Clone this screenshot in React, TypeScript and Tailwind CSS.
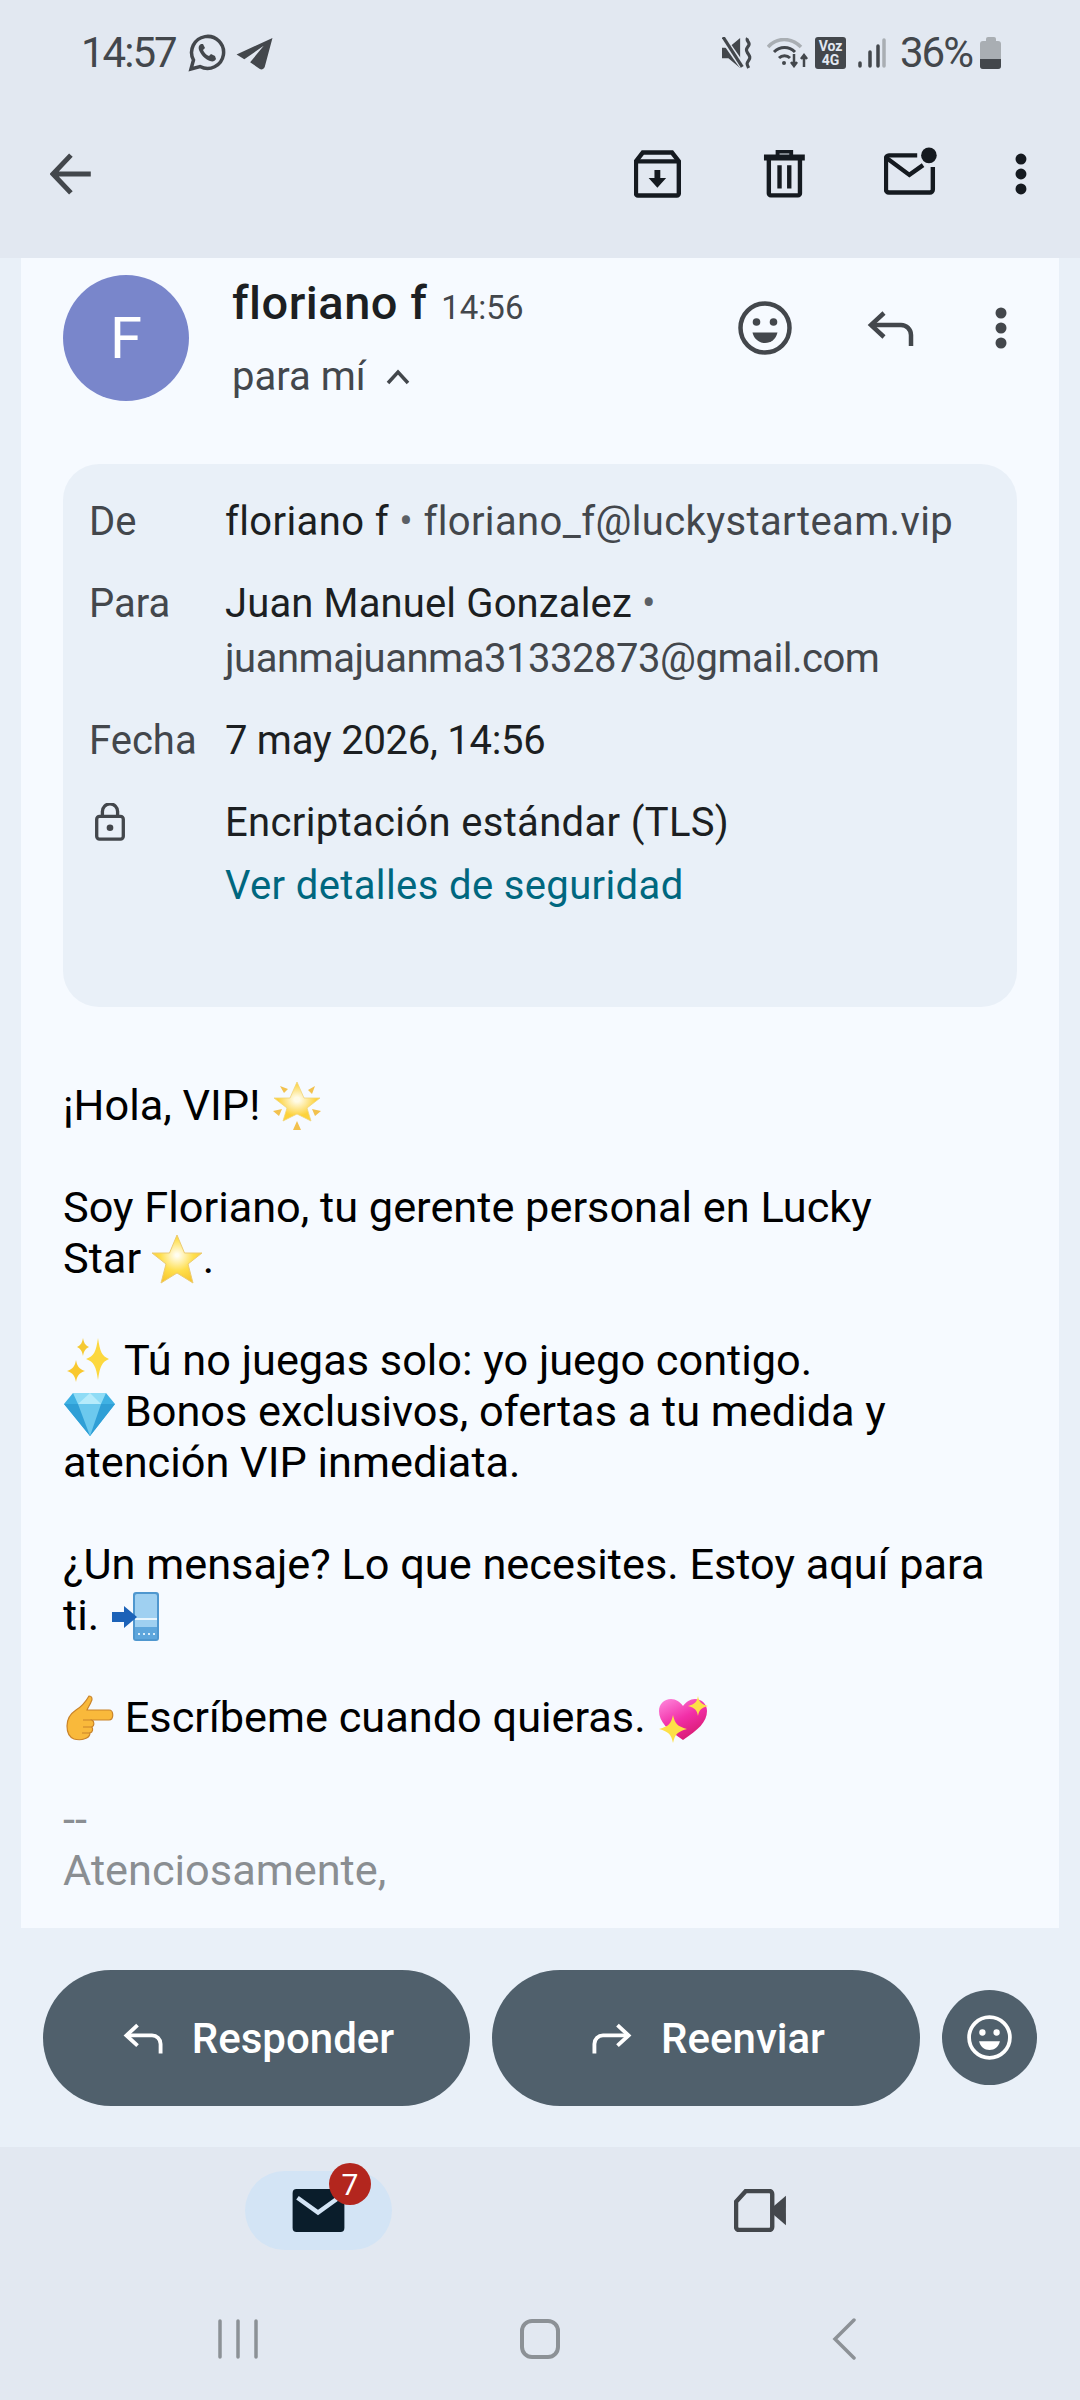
import React from "react";

const font = { fontFamily: "Roboto, sans-serif" };

type IconProps = { className?: string };

const Reply: React.FC<IconProps> = ({ className }) => (
  <svg viewBox="0 0 48 36" className={className} fill="none" stroke="currentColor" strokeWidth="4.5">
    <path d="M17 3 4 15l13 12" />
    <path d="M4 15h30a10 10 0 0 1 10 10v11" />
  </svg>
);

const Forward: React.FC<IconProps> = ({ className }) => (
  <svg viewBox="0 0 48 36" className={className} fill="none" stroke="currentColor" strokeWidth="4.5">
    <path d="M31 3l13 12-13 12" />
    <path d="M44 15H14A10 10 0 0 0 4 25v11" />
  </svg>
);

const Smile: React.FC<IconProps> = ({ className }) => (
  <svg viewBox="0 0 54 54" className={className} fill="none">
    <circle cx="27" cy="27" r="24.500" stroke="currentColor" strokeWidth="4.500" />
    <circle cx="18.500" cy="21" r="3.800" fill="currentColor" />
    <circle cx="35.500" cy="21" r="3.800" fill="currentColor" />
    <path d="M14.500 31.500h25C38 38 33 42 27 42s-11-4-12.500-10.500z" fill="currentColor" />
  </svg>
);

const Dots: React.FC<IconProps> = ({ className }) => (
  <svg viewBox="0 0 12 42" className={className} fill="currentColor">
    <circle cx="6" cy="6" r="5.500" />
    <circle cx="6" cy="21" r="5.500" />
    <circle cx="6" cy="36" r="5.500" />
  </svg>
);

// every emoji sits in the same 53px box, 11px under the baseline, with a 51px advance
const emojiAfterText = "inline-block h-[53px] w-[53px] my-[-15px] ml-[-2px] align-[4px] overflow-visible";
const emojiLineStart = "inline-block h-[53px] w-[53px] my-[-15px] mr-[-2px] align-[4px] overflow-visible";

const Glow = () => (
  <svg viewBox="0 0 53 53" className={emojiAfterText}>
    <defs>
      <radialGradient id="glow-fill" cx="0.5" cy="0.45" r="0.6">
        <stop offset="0.1" stopColor="#fffbe6" />
        <stop offset="0.7" stopColor="#fdd23a" />
      </radialGradient>
    </defs>
    <path d="M28 4l7 16h16l-13 10 4 13-14-7-14 7 4-13L5 20h16z" fill="url(#glow-fill)" stroke="#f0d47a" strokeWidth="0.800" />
    <path d="M11 8l8 3-4 4zM46 8l-3 8-4-4zM4 33l9-2-3 7zM52 33l-9-2 3 7zM28 43l4 9h-8z" fill="#f2c14e" />
  </svg>
);

const Star = () => (
  <svg viewBox="0 0 53 53" className={emojiAfterText}>
    <defs>
      <radialGradient id="star-fill" cx="0.5" cy="0.42" r="0.6">
        <stop offset="0.05" stopColor="#fffdf0" />
        <stop offset="0.55" stopColor="#ffdf4d" />
        <stop offset="1" stopColor="#f7c52e" />
      </radialGradient>
    </defs>
    <path d="M27 4l7.500 18H52L38 33l5 19-16-10-16 10 5-19L2 22h17.500z" fill="url(#star-fill)" stroke="#eccb72" strokeWidth="1" strokeLinejoin="round" />
  </svg>
);

const Sparkles = () => (
  <svg viewBox="0 0 53 53" className={emojiLineStart}>
    <path d="M35 5c2 14 4 18 11 21-7 3-9 7-11 21-2-14-4-18-12-21 8-3 10-7 12-21z" fill="#fcd83f" />
    <path d="M20 5c1 5 2 7 6 9-4 2-5 4-6 9-1-5-2-7-6-9 4-2 5-4 6-9z" fill="#f5c932" />
    <path d="M13 27c1 6 3 9 9 11-6 2-8 5-9 11-1-6-3-9-9-11 6-2 8-5 9-11z" fill="#f9c82e" />
  </svg>
);

const Gem = () => (
  <svg viewBox="0 0 53 53" className={emojiLineStart}>
    <path d="M10 9h33l9 11-25 32L1 20z" fill="#3fb1e3" />
    <path d="M1 20h51L27 52z" fill="#2f9fd6" />
    <path d="M15 20h23L27 52z" fill="#6cc9ee" />
    <path d="M10 9h33l-5 11H15z" fill="#8fdcf6" />
    <path d="M27 9l11 11H15z" fill="#b6ebfb" />
  </svg>
);

const PhoneIn = () => (
  <svg viewBox="0 0 53 53" className={emojiAfterText}>
    <rect x="25" y="4" width="26" height="49" rx="3" fill="#4f97cf" />
    <rect x="27" y="6" width="22" height="45" rx="2" fill="#9fd0f1" />
    <rect x="27" y="30" width="22" height="2" fill="#e8f5fd" />
    <rect x="27" y="39" width="22" height="12" fill="#5ea6dc" />
    <path d="M30 45h2v2h-2zM35 45h2v2h-2zM40 45h2v2h-2zM45 45h2v2h-2z" fill="#dbeefb" />
    <path d="M4 24h12v-6l13 11-13 11v-6H4z" fill="#1c62b8" />
  </svg>
);

const PointRight = () => (
  <svg viewBox="0 0 53 53" className={emojiLineStart}>
    <path d="M26 6c3 0 4 3 2 6-1 3-3 5-4 8h22c5 0 5 10 0 10H29c3 2 2 6 0 7 1 2 1 5-2 6 0 3-2 5-6 6-2 1-7 1-10 0-5-2-7-7-7-13 0-7 3-12 9-16 5-3 9-7 13-14z" fill="#f9b93b" stroke="#c9832a" strokeWidth="1.200" />
    <path d="M20 30h9M20 37h9M19 43h8" stroke="#c9832a" strokeWidth="1.200" fill="none" />
  </svg>
);

const Heart = () => (
  <svg viewBox="0 0 53 53" className={emojiAfterText}>
    <defs>
      <linearGradient id="heart-fill" x1="0" y1="0" x2="0.6" y2="1">
        <stop offset="0" stopColor="#ff8ade" />
        <stop offset="0.55" stopColor="#f22fa8" />
        <stop offset="1" stopColor="#d81b72" />
      </linearGradient>
    </defs>
    <path d="M29 50C14 40 5 32 5 21 5 14 10 9 17 9c5 0 9 3 12 7 3-4 7-7 12-7 7 0 12 5 12 12 0 11-9 19-24 29z" fill="url(#heart-fill)" />
    <path d="M19 25c2 9 4 11 14 14-10 3-12 5-14 14-2-9-4-11-14-14 10-3 12-5 14-14z" fill="#fde047" />
    <path d="M44 6c1 6 3 8 10 10-7 2-9 4-10 10-1-6-3-8-10-10 7-2 9-4 10-10z" fill="#fde047" />
  </svg>
);

const StatusBar = () => (
  <div className="flex h-[105px] items-start justify-between pl-[81px] pr-[79px] pt-[33px] text-[#43474c]">
    <div className="flex items-center">
      <span className="text-[42px] leading-[40px] tracking-[-2px]">14:57</span>
      <svg viewBox="0 0 38 38" className="ml-[12px] h-[38px] w-[38px]" fill="none">
        <path d="M3 35l2.500-9A16 16 0 1 1 12 32.500z" stroke="currentColor" strokeWidth="3.500" />
        <path d="M13 10c-2 1-3 3-2 6 2 5 6 9 11 11 3 1 5 0 6-2l-1-3-4-2-2 2c-3-1-5-4-6-6l2-2-2-4z" fill="currentColor" />
      </svg>
      <svg viewBox="0 0 38 34" className="ml-[10px] h-[33px] w-[38px]" fill="currentColor">
        <path d="M37 1 0 18l8 5L28 9 14 26l10 7c2 1 4 0 5-2z" />
      </svg>
    </div>
    <div className="flex items-center">
      <svg viewBox="0 0 30 30" className="h-[32px] w-[32px]" fill="currentColor">
        <path d="M0 10h6l11-9v28L6 20H0z" />
        <path d="M0 0l19 27" stroke="#e2e8f1" strokeWidth="6" />
        <path d="M1 0l18 28" stroke="currentColor" strokeWidth="3" />
        <path d="M24 1c-2 3 3 4 1 7s-3 4-1 7 3 4 1 7-2 3 0 7" stroke="currentColor" strokeWidth="3" fill="none" />
      </svg>
      <svg viewBox="0 0 42 30" className="ml-[13px] h-[30px] w-[42px]" fill="none">
        <path d="M1 9C10-1 24-1 34 9" stroke="#a9aeb3" strokeWidth="3.500" />
        <path d="M7 14c6-6 15-6 21 0M12 20c3-3 8-3 11 0" stroke="#43474c" strokeWidth="3" />
        <circle cx="17" cy="25" r="2" fill="#43474c" />
        <path d="M27 16v12m-3-4 3 4 3-4M37 29V17m-3 4 3-4 3 4" stroke="#43474c" strokeWidth="2.500" />
      </svg>
      <div className="ml-[6px] flex h-[32px] w-[31px] flex-col items-center justify-center rounded-[3px] bg-[#43474c] text-[14px] font-bold leading-[14px] text-[#e2e8f1]">
        <span>Voz</span>
        <span>4G</span>
      </div>
      <svg viewBox="0 0 28 30" className="ml-[12px] h-[30px] w-[28px]" fill="none" strokeWidth="3.500" strokeLinecap="round">
        <path d="M2 25v3M12 14v14" stroke="#43474c" />
        <path d="M20 8v20" stroke="#43474c" />
        <path d="M26 2v26" stroke="#a9aeb3" />
      </svg>
      <span className="ml-[14px] text-[42px] leading-[40px] tracking-[-2px]">36%</span>
      <div className="ml-[8px] flex flex-col items-center">
        <div className="h-[4px] w-[10px] rounded-t-[2px] bg-[#a9aeb3]" />
        <div className="flex h-[28px] w-[21px] flex-col justify-end overflow-hidden rounded-[3px] bg-[#a9aeb3]">
          <div className="h-[10px] bg-[#43474c]" />
        </div>
      </div>
    </div>
  </div>
);

const Toolbar = () => (
  <div className="flex h-[153px] items-start pl-[50px] pr-[53px] pt-[45px] text-[#151a20]">
    <svg viewBox="0 0 42 42" className="mt-[3px] h-[42px] w-[42px] text-[#43474c]" fill="none" stroke="currentColor" strokeWidth="5">
      <path d="M41 21H4M21 2 3 21l18 19" />
    </svg>
    <svg viewBox="0 0 48 48" className="ml-[542px] h-[48px] w-[47px]" fill="none">
      <path d="M9 2h30l7 9v33a2 2 0 0 1-2 2H4a2 2 0 0 1-2-2V11z" stroke="currentColor" strokeWidth="4.500" />
      <path d="M2 11h44" stroke="currentColor" strokeWidth="4.500" />
      <path d="M21 20h6v8h6L24 38l-9-10h6z" fill="currentColor" />
    </svg>
    <svg viewBox="0 0 44 48" className="ml-[82px] h-[48px] w-[43px]" fill="none" stroke="currentColor">
      <path d="M1 7h42" strokeWidth="6" />
      <path d="M15 5V1h14v4" strokeWidth="4" />
      <path d="M6 9v35a2 2 0 0 0 2 2h28a2 2 0 0 0 2-2V9" strokeWidth="4.500" />
      <path d="M17 15v24M27 15v24" strokeWidth="4.500" />
    </svg>
    <svg viewBox="0 0 54 48" className="ml-[79px] mt-[-3px] h-[48px] w-[53px]" fill="none">
      <path d="M34 8H5a3 3 0 0 0-3 3v32a3 3 0 0 0 3 3h42a3 3 0 0 0 3-3V20" stroke="currentColor" strokeWidth="4.500" />
      <path d="M3 11l23 17 14-10" stroke="currentColor" strokeWidth="4.500" />
      <circle cx="46" cy="8" r="8" fill="currentColor" />
    </svg>
    <Dots className="ml-[78px] mt-[3px] h-[42px] w-[12px]" />
  </div>
);

const Row: React.FC<{ label: string; className?: string; children: React.ReactNode }> = ({ label, className, children }) => (
  <div className={`flex ${className ?? ""}`}>
    <span className="w-[136px] shrink-0 text-[#43474c]">{label}</span>
    <div className="text-[#1c1f22]">{children}</div>
  </div>
);

const DetailsPanel = () => (
  <div className="mx-[42px] mt-[63px] h-[543px] rounded-[36px] bg-[#e9f0f8] pl-[26px] pt-[30px] text-[40px] leading-[55px]">
    <Row label="De">
      <span className="tracking-[0.37px]">
        floriano f <span className="text-[#5b6066]">•</span> <span className="text-[#43474c]">floriano_f@luckystarteam.vip</span>
      </span>
    </Row>
    <Row label="Para" className="mt-[27px]">
      <span className="tracking-[0.14px]">
        Juan Manuel Gonzalez <span className="text-[#5b6066]">•</span>
      </span>
      <br />
      <span className="tracking-[-0.47px] text-[#43474c]">juanmajuanma31332873@gmail.com</span>
    </Row>
    <Row label="Fecha" className="mt-[27px]">
      <span className="tracking-[-0.27px]">7 may 2026, 14:56</span>
    </Row>
    <div className="mt-[27px] flex">
      <div className="w-[136px] shrink-0 pl-[5px] pt-[8px]">
        <svg viewBox="0 0 32 40" className="h-[38px] w-[32px] text-[#43474c]" fill="none" stroke="currentColor" strokeWidth="3.500">
          <rect x="2" y="14" width="28" height="24" rx="3" />
          <path d="M8 14V9a8 8 0 0 1 16 0v5" />
          <circle cx="16" cy="26" r="3.500" fill="currentColor" stroke="none" />
        </svg>
      </div>
      <div>
        <div className="tracking-[0.33px] text-[#1c1f22]">Encriptación estándar (TLS)</div>
        <div className="mt-[8px] tracking-[0.37px] text-[#00677f]">Ver detalles de seguridad</div>
      </div>
    </div>
  </div>
);

const Card = () => (
  <div className="mx-[21px] flex-1 overflow-hidden bg-[#f6faff]">
    <div className="flex h-[143px] items-start pl-[42px] pr-[52px] pt-[17px]">
      <div className="flex h-[126px] w-[126px] shrink-0 items-center justify-center rounded-full bg-[#7986cb] text-[58px] text-white">F</div>
      <div className="ml-[43px] flex-1">
        <div className="flex items-baseline leading-[56px] text-[#1c1f22]">
          <span className="text-[47px] font-medium tracking-[0.5px]">floriano f</span>
          <span className="ml-[14px] text-[33px] text-[#43474c]">14:56</span>
        </div>
        <div className="mt-[17px] flex items-center text-[#43474c]">
          <span className="text-[40px] leading-[48px]">para mí</span>
          <svg viewBox="0 0 24 16" className="ml-[20px] h-[16px] w-[24px]" fill="none" stroke="currentColor" strokeWidth="3.500">
            <path d="M2 14 12 3l10 11" />
          </svg>
        </div>
      </div>
      <Smile className="mt-[26px] h-[54px] w-[54px] text-[#43474c]" />
      <Reply className="ml-[75px] mt-[35px] h-[36px] w-[48px] text-[#43474c]" />
      <Dots className="ml-[80px] mt-[32px] h-[42px] w-[12px] text-[#43474c]" />
    </div>
    <DetailsPanel />
    <div className="px-[42px] pt-[73px] text-[43.3px] leading-[51px] text-black">
      <p>¡Hola, VIP! <Glow /></p>
      <p className="mt-[51px]">
        Soy Floriano, tu gerente personal en Lucky
        <br />
        Star <Star />.
      </p>
      <p className="mt-[51px]">
        <Sparkles /> Tú no juegas solo: yo juego contigo.
        <br />
        <Gem /> Bonos exclusivos, ofertas a tu medida y
        <br />
        atención VIP inmediata.
      </p>
      <p className="mt-[51px]">
        ¿Un mensaje? Lo que necesites. Estoy aquí para
        <br />
        ti. <PhoneIn />
      </p>
      <p className="mt-[51px]">
        <PointRight /> Escríbeme cuando quieras. <Heart />
      </p>
      <p className="mt-[51px] text-[#8a8e92]">
        --
        <br />
        Atenciosamente,
      </p>
    </div>
  </div>
);

const ActionBar = () => (
  <div className="flex h-[219px] items-start pl-[43px] pt-[42px]">
    <div className="flex h-[136px] w-[427px] items-center justify-center rounded-full bg-[#50606c] pl-[4px] text-[42px] font-medium text-white">
      <Reply className="h-[32px] w-[41px]" />
      <span className="ml-[28px]">Responder</span>
    </div>
    <div className="ml-[22px] flex h-[136px] w-[428px] items-center justify-center rounded-full bg-[#50606c] pl-[4px] text-[42px] font-medium text-white">
      <Forward className="h-[32px] w-[41px]" />
      <span className="ml-[29px]">Reenviar</span>
    </div>
    <div className="ml-[22px] mt-[20px] flex h-[95px] w-[95px] items-center justify-center rounded-full bg-[#50606c] text-white">
      <Smile className="h-[45px] w-[45px]" />
    </div>
  </div>
);

const BottomNav = () => (
  <div className="h-[253px] bg-[#e2e8f1]">
    <div className="flex h-[172px] items-start pl-[245px] pt-[24px]">
      <div className="relative flex h-[79px] w-[147px] items-center justify-center rounded-full bg-[#d3e4f5]">
        <svg viewBox="0 0 53 44" className="h-[43px] w-[53px]">
          <rect width="53" height="44" rx="4" fill="#0a1d2b" />
          <path d="M5 9l21 15 21-15" fill="none" stroke="#d3e4f5" strokeWidth="4.500" />
        </svg>
        <span className="absolute left-[84px] top-[-8px] flex h-[42px] w-[42px] items-center justify-center rounded-full bg-[#b3261e] text-[30px] text-white">7</span>
      </div>
      <svg viewBox="0 0 54 44" className="ml-[342px] mt-[18px] h-[43px] w-[53px] text-[#43474c]" fill="none">
        <path d="M12 2h24a3 3 0 0 1 3 3v34a3 3 0 0 1-3 3H5a3 3 0 0 1-3-3V13z" stroke="currentColor" strokeWidth="4.500" />
        <path d="M39 19l14-12v30L39 25z" fill="currentColor" />
      </svg>
    </div>
    <div className="flex items-start pl-[218px] text-[#8c9196]">
      <svg viewBox="0 0 42 40" className="h-[40px] w-[42px]" fill="none" stroke="currentColor" strokeWidth="3.500" strokeLinecap="round">
        <path d="M2 2v36M20 2v36M38 2v36" />
      </svg>
      <div className="ml-[260px] h-[40px] w-[40px] rounded-[12px] border-[4px] border-[#8c9196]" />
      <svg viewBox="0 0 24 42" className="ml-[272px] mt-[-1px] h-[42px] w-[24px]" fill="none" stroke="currentColor" strokeWidth="3.500" strokeLinecap="round">
        <path d="M22 2 3 21l19 19" />
      </svg>
    </div>
  </div>
);

export default function App() {
  return (
    <div style={font} className="flex h-[2400px] w-[1080px] flex-col overflow-hidden bg-[#e9f0f8]">
      <div className="bg-[#e2e8f1]">
        <StatusBar />
        <Toolbar />
      </div>
      <Card />
      <ActionBar />
      <BottomNav />
    </div>
  );
}
